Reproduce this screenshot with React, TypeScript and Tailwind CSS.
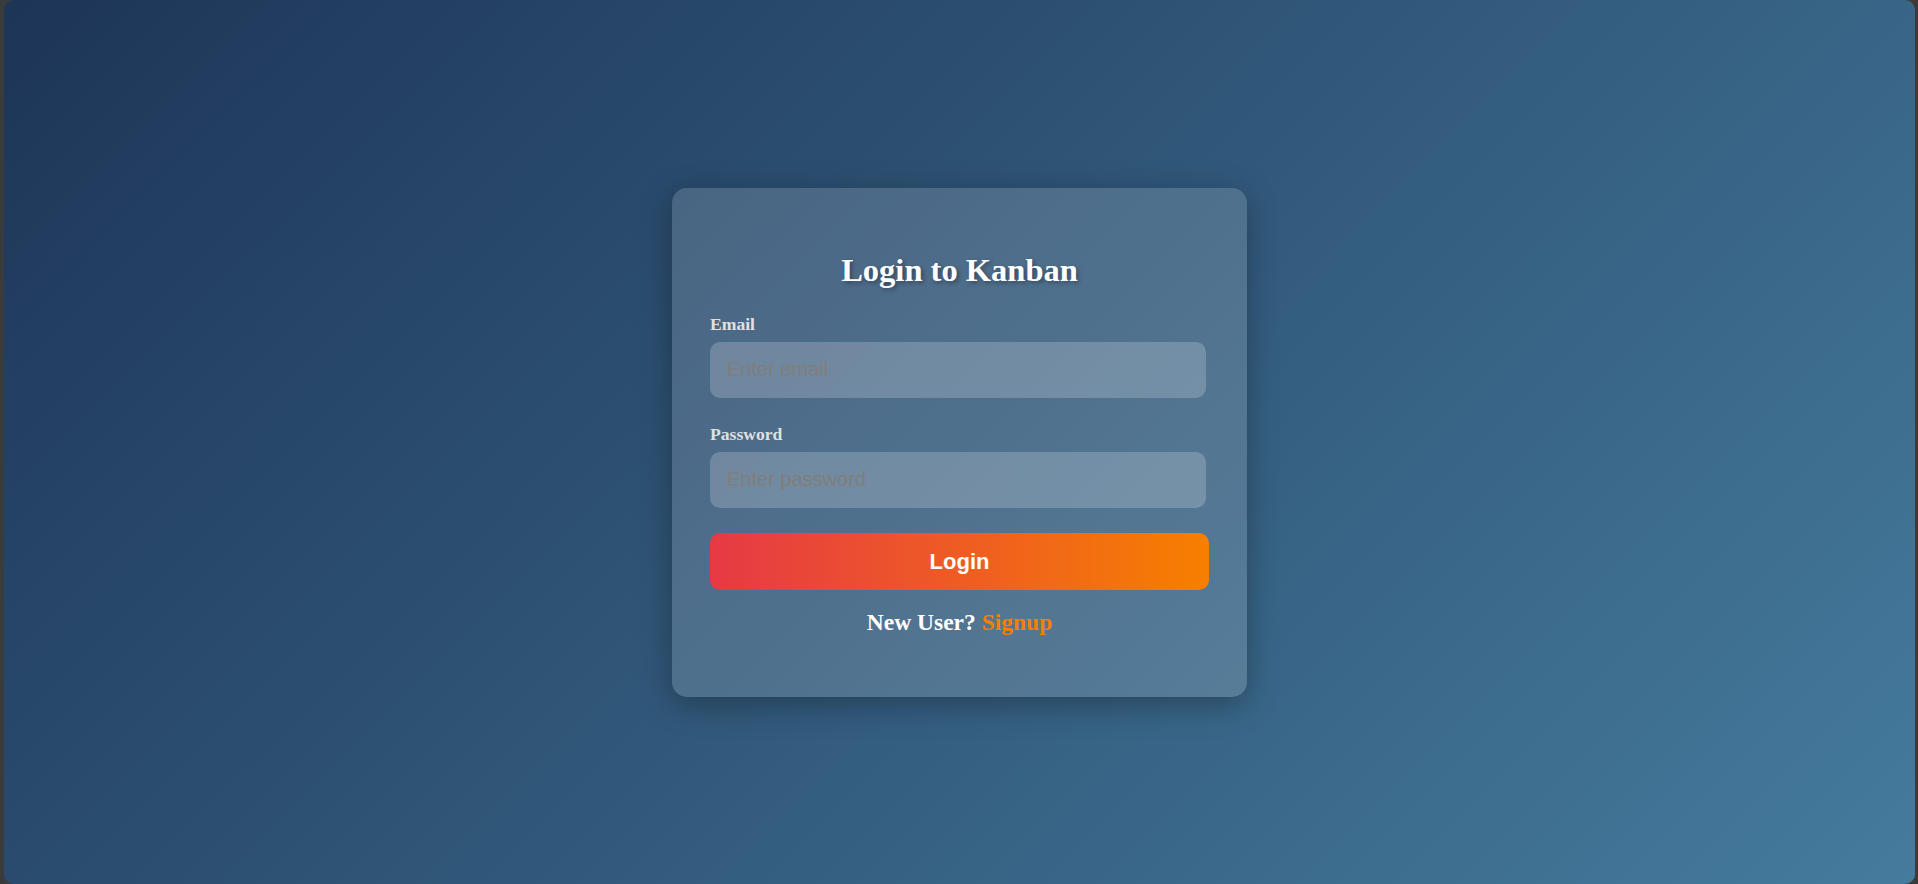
import { useState } from 'react'

function Field({
  label,
  type,
  placeholder,
  value,
  onChange,
}: {
  label: string
  type: string
  placeholder: string
  value: string
  onChange: (v: string) => void
}) {
  return (
    <div className="flex flex-col">
      <label className="mb-[8px] text-[17.6px] leading-[20px] font-bold text-[#e0e0e0] font-['Liberation_Serif',serif]">
        {label}
      </label>
      <input
        type={type}
        placeholder={placeholder}
        value={value}
        onChange={(e) => onChange(e.target.value)}
        className="h-[56px] w-[496px] rounded-[10px] bg-[rgba(255,255,255,0.2)] px-[17px] text-[20px] text-white outline-none placeholder:text-[#817d7a] font-['Liberation_Sans',Arial,sans-serif]"
      />
    </div>
  )
}

export default function App() {
  const [email, setEmail] = useState('')
  const [password, setPassword] = useState('')

  return (
    <div className="h-[884px] w-full bg-[#3b3b3b] pl-[4px] pr-[3px]">
      <div className="flex h-full w-full items-center justify-center rounded-[10px] bg-[linear-gradient(135deg,#1d3557,#457b9d)]">
        <div className="flex w-[575px] flex-col rounded-[15px] bg-[rgba(255,255,255,0.15)] px-[38px] pt-[64px] pb-[61px] shadow-[0_8px_32px_rgba(0,0,0,0.3)]">
          <h2 className="text-center text-[32.5px] leading-[37px] font-bold text-white [text-shadow:2px_2px_4px_rgba(0,0,0,0.35)] font-['Liberation_Serif',serif]">
            Login to Kanban
          </h2>

          <div className="mt-[25px] flex flex-col gap-[26px]">
            <Field
              label="Email"
              type="email"
              placeholder="Enter email"
              value={email}
              onChange={setEmail}
            />
            <Field
              label="Password"
              type="password"
              placeholder="Enter password"
              value={password}
              onChange={setPassword}
            />
          </div>

          <button className="mt-[25px] h-[57px] w-full rounded-[10px] bg-[linear-gradient(90deg,#e63946,#f77f00)] text-[22px] font-bold text-white font-['Liberation_Sans',Arial,sans-serif]">
            Login
          </button>

          <p className="mt-[19px] text-center text-[23.5px] leading-[27px] font-bold text-white font-['Liberation_Serif',serif]">
            New User? <span className="text-[#f77f00]">Signup</span>
          </p>
        </div>
      </div>
    </div>
  )
}
